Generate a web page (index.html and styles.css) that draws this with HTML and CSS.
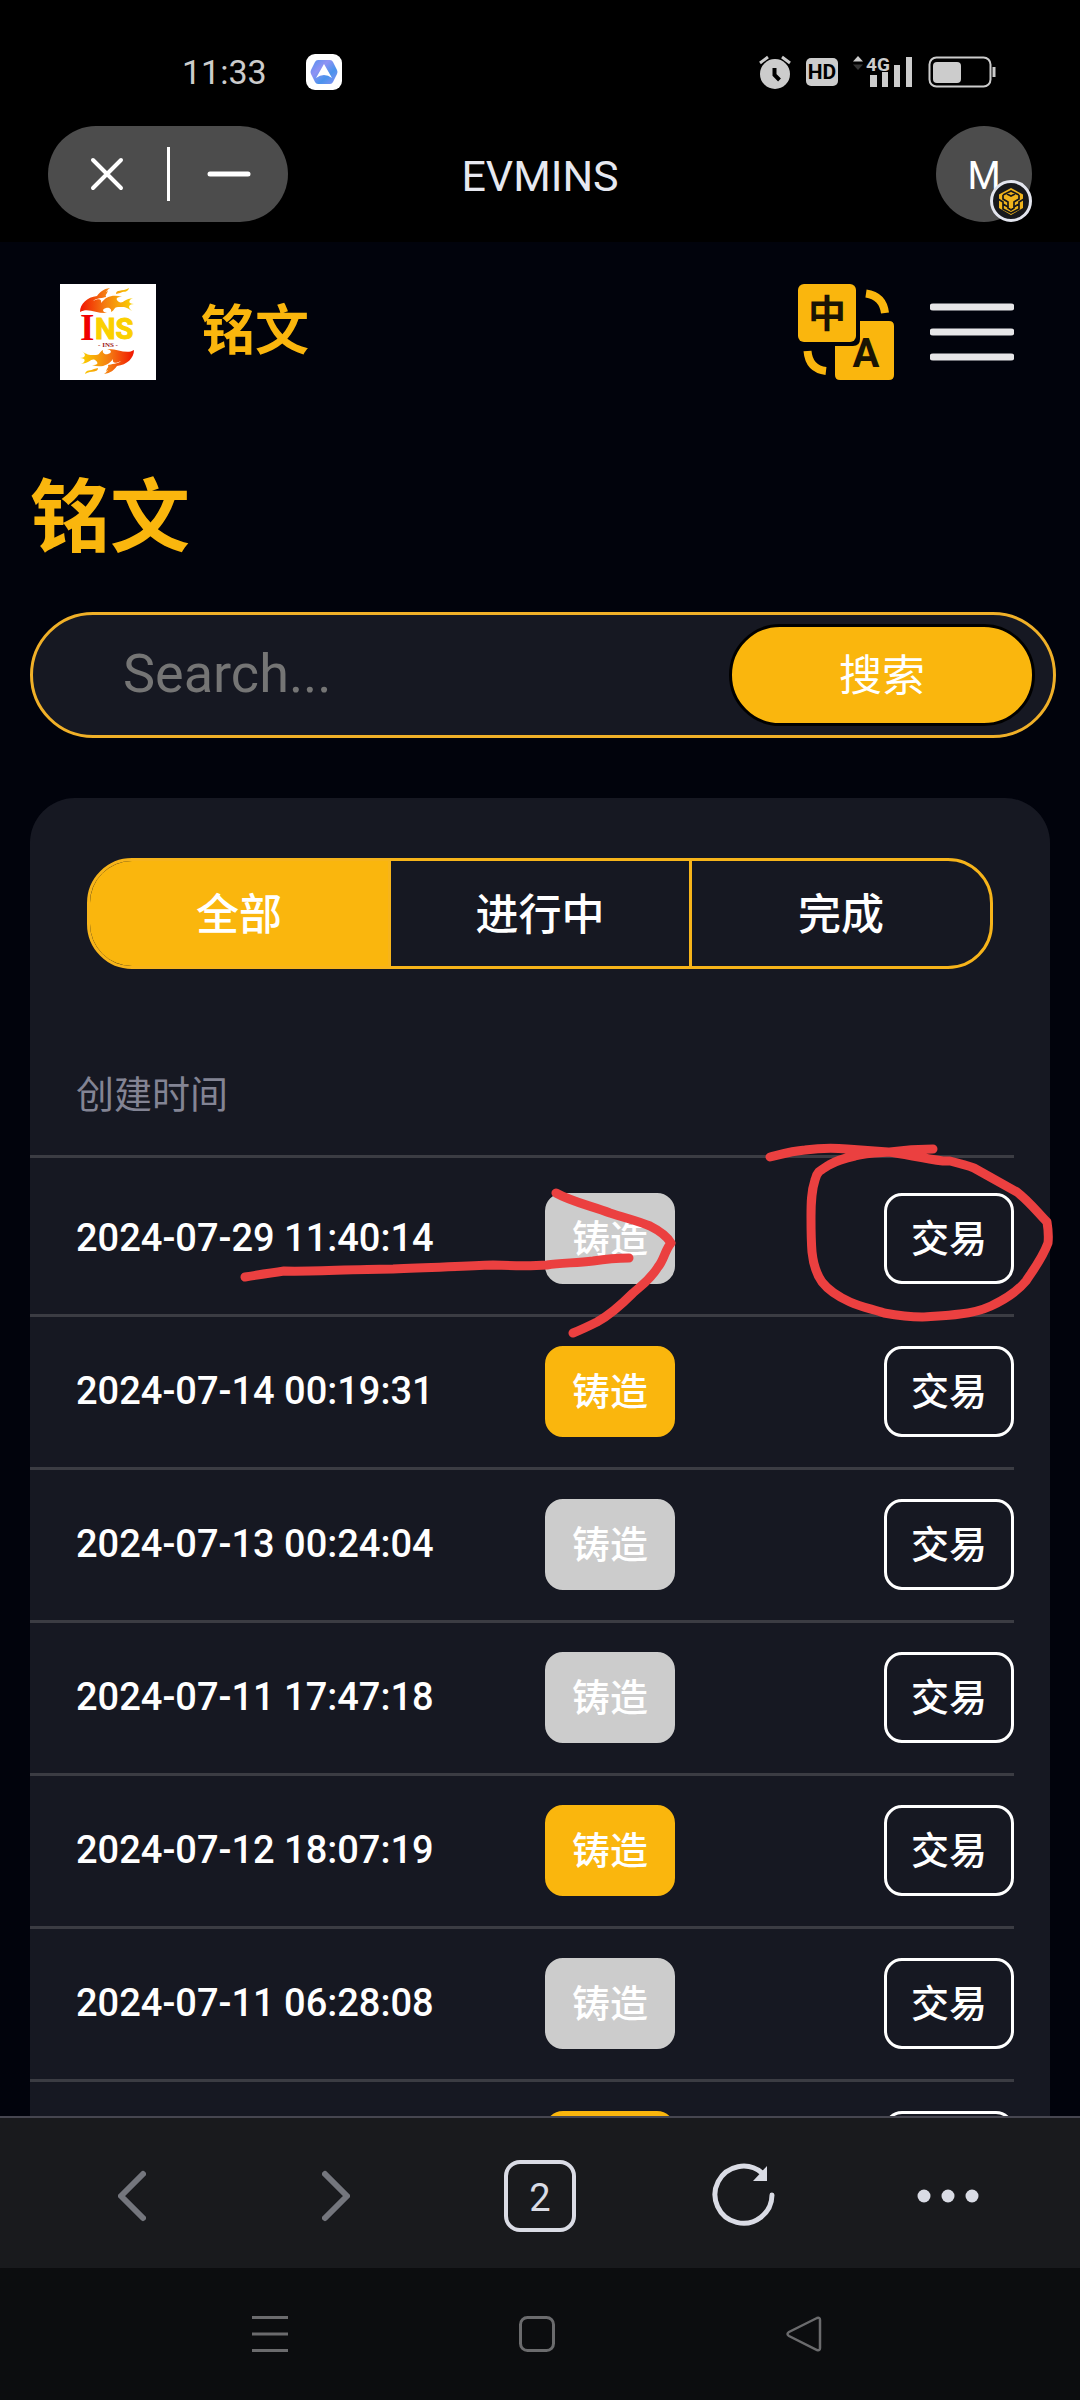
FILE: index.html
```html
<!DOCTYPE html>
<html lang="zh-CN">
<head>
  <meta charset="UTF-8">
  <meta name="viewport" content="width=device-width, initial-scale=1">
  <title>EVMINS</title>
  <link rel="stylesheet" href="styles.css">
</head>
<body>
  <div class="status-bar">
    <span class="clock">11:33</span>
    <svg class="app-icon" width="36" height="36" viewBox="0 0 36 36">
      <defs>
        <linearGradient id="hex" x1="0" y1="0" x2="1" y2="1">
          <stop offset="0" stop-color="#4f8fee"/>
          <stop offset=".35" stop-color="#8f92f4"/>
          <stop offset=".65" stop-color="#4a93ec"/>
          <stop offset="1" stop-color="#8b90f5"/>
        </linearGradient>
      </defs>
      <rect width="36" height="36" rx="9" fill="#fff"/>
      <path d="M12 6h12q2 0 3 2l4 8q1 2 0 4l-4 8q-1 2-3 2H12q-2 0-3-2l-4-8q-1-2 0-4l4-8q1-2 3-2z" fill="url(#hex)"/>
      <path d="M18 10l8 14q-8-6-16 0z" fill="#fff"/>
    </svg>
    <div class="status-icons">
      <svg width="32" height="34" viewBox="0 0 32 34">
        <circle cx="16" cy="19" r="15" fill="#ccc"/>
        <path d="M1 8l8-6M31 8l-8-6" stroke="#ccc" stroke-width="3"/>
        <path d="M15.500 13v7l5 5" fill="none" stroke="#000" stroke-width="4"/>
      </svg>
      <span class="hd">HD</span>
      <svg width="60" height="34" viewBox="0 0 60 34">
        <path d="M0 6.500l5-5.500 5 5.500z" fill="#ccc"/>
        <path d="M0 9.500l5 5.500 5-5.500z" fill="#333"/>
        <text x="13" y="16" class="net">4G</text>
        <path d="M17 20h7v12h-7zM29 17h6v15h-6zM41 10h6v22h-6zM53 2h6v30h-6z" fill="#ccc"/>
      </svg>
      <svg width="68" height="34" viewBox="0 0 68 34">
        <rect x="1.500" y="2.500" width="61" height="29" rx="7" fill="none" stroke="#ccc" stroke-width="2"/>
        <rect x="5" y="7" width="28" height="21" rx="4" fill="#ccc"/>
        <path d="M66 12v10" stroke="#ccc" stroke-width="3"/>
      </svg>
    </div>
  </div>

  <header class="app-bar">
    <div class="app-side">
      <div class="pill">
        <button class="icon-btn" aria-label="Close">
          <svg width="36" height="36" viewBox="0 0 36 36"><path d="M4 4l28 28M32 4L4 32" stroke="#fff" stroke-width="4" stroke-linecap="round"/></svg>
        </button>
        <span class="pill-line"></span>
        <button class="icon-btn" aria-label="Minimize">
          <svg width="44" height="36" viewBox="0 0 44 36"><path d="M3 18h38" stroke="#fff" stroke-width="5" stroke-linecap="round"/></svg>
        </button>
      </div>
    </div>
    <h1 class="app-title">EVMINS</h1>
    <div class="app-side app-side-right">
      <button class="avatar">M
        <svg class="chain-badge" width="42" height="42" viewBox="0 0 42 42">
          <circle cx="21" cy="21" r="19.500" fill="#17181b" stroke="#e3e5ee" stroke-width="3"/>
          <path d="M21 8l12 6.500v13.500L21 35 9 28V14.500z" fill="#f0b41c"/>
          <g fill="none" stroke="#17181b" stroke-width="1.700">
            <path d="M13 15l8-4 8 4M13 15v4l5 3v6l3 2 3-2v-6l5-3v-4M17 14l4 2 4-2"/>
            <path d="M8 19l5 3v7l8 4 8-4v-7l5-3M13 24l5 3M29 24l-5 3"/>
          </g>
        </svg>
      </button>
    </div>
  </header>

  <main class="page">
    <nav class="site-nav">
      <svg class="logo" width="96" height="96" viewBox="0 0 96 96">
        <defs>
          <linearGradient id="fire" gradientUnits="userSpaceOnUse" x1="20" y1="0" x2="74" y2="0">
            <stop offset="0" stop-color="#f11400"/>
            <stop offset=".45" stop-color="#f47a12"/>
            <stop offset="1" stop-color="#fbd500"/>
          </linearGradient>
          <g id="flame" fill="url(#fire)">
            <path d="M20 28C20 20 27 13 37 12C40 8 43 5 50 4C46 7 45 9 46 13C43 14 36 14 33 17C39 14 42 15 41 19C46 12 54 10 62 13C56 13 55 15 59 18C63 20 64 15 73 14C68 16 68 20 74 20C69 20 67 23 72 27C66 22 62 23 58 23C54 23 55 26 51 28C52 25 49 23 46 24C42 25 42 28 47 29C37 30 28 23 20 28Z"/>
            <path d="M56 10C56 5 62 8 69 4C68 9 63 7 60 9Z"/>
            <path d="M38 14C41 8 46 10 48 6C47 11 44 13 40 14Z"/>
          </g>
        </defs>
        <rect width="96" height="96" fill="#fff"/>
        <use href="#flame"/>
        <use href="#flame" transform="rotate(180 47 47)"/>
        <text x="20" y="56" class="logo-i">I</text>
        <text x="35" y="55" class="logo-ns">NS</text>
        <text x="48" y="63" class="logo-small">- INS -</text>
      </svg>
      <a class="brand" href="#">铭文</a>
      <button class="icon-btn lang" aria-label="切换语言">
        <svg width="96" height="96" viewBox="0 0 96 96">
          <rect width="58" height="58" rx="6" fill="#fab60d"/>
          <path d="M62 37h29q5 0 5 5v49q0 5-5 5H42q-5 0-5-5V62h18q7 0 7-7z" fill="#fab60d"/>
          <path d="M68 9.500Q85 12 87 29M9.500 67Q11 85 28 87" fill="none" stroke="#fab60d" stroke-width="8"/>
          <text x="29" y="43" class="lang-zh">中</text>
          <text x="68" y="83" class="lang-en">A</text>
        </svg>
      </button>
      <button class="icon-btn" aria-label="菜单">
        <svg width="84" height="60" viewBox="0 0 84 60"><path d="M3 5h78M3 30h78M3 55h78" stroke="#e6e6e8" stroke-width="7" stroke-linecap="round"/></svg>
      </button>
    </nav>

    <h2 class="heading">铭文</h2>

    <form class="search">
      <input type="text" class="search-input" placeholder="Search..." aria-label="Search">
      <button type="button" class="search-btn">搜索</button>
    </form>

    <section class="card">
      <div class="tabs">
        <button class="tab active">全部</button>
        <button class="tab">进行中</button>
        <button class="tab">完成</button>
      </div>
      <table class="list">
        <thead>
          <tr><th class="col-time">创建时间</th><th></th><th></th></tr>
        </thead>
        <tbody>
          <tr><td>2024-07-29 11:40:14</td><td><button class="btn mint off">铸造</button></td><td class="right"><button class="btn trade">交易</button></td></tr>
          <tr><td>2024-07-14 00:19:31</td><td><button class="btn mint">铸造</button></td><td class="right"><button class="btn trade">交易</button></td></tr>
          <tr><td>2024-07-13 00:24:04</td><td><button class="btn mint off">铸造</button></td><td class="right"><button class="btn trade">交易</button></td></tr>
          <tr><td>2024-07-11 17:47:18</td><td><button class="btn mint off">铸造</button></td><td class="right"><button class="btn trade">交易</button></td></tr>
          <tr><td>2024-07-12 18:07:19</td><td><button class="btn mint">铸造</button></td><td class="right"><button class="btn trade">交易</button></td></tr>
          <tr><td>2024-07-11 06:28:08</td><td><button class="btn mint off">铸造</button></td><td class="right"><button class="btn trade">交易</button></td></tr>
          <tr><td></td><td><button class="btn mint" aria-label="铸造"></button></td><td class="right"><button class="btn trade" aria-label="交易"></button></td></tr>
        </tbody>
      </table>
    </section>
  </main>

  <nav class="browser-bar">
    <button class="icon-btn" aria-label="Back">
      <svg width="28" height="52" viewBox="0 0 28 52"><path d="M25 4L3 26l22 22" fill="none" stroke="#74767d" stroke-width="6" stroke-linecap="round" stroke-linejoin="round"/></svg>
    </button>
    <button class="icon-btn" aria-label="Forward">
      <svg width="28" height="52" viewBox="0 0 28 52"><path d="M3 4l22 22L3 48" fill="none" stroke="#74767d" stroke-width="6" stroke-linecap="round" stroke-linejoin="round"/></svg>
    </button>
    <button class="icon-btn" aria-label="Tabs"><span class="tab-count">2</span></button>
    <button class="icon-btn" aria-label="Reload">
      <svg width="64" height="68" viewBox="0 0 64 68">
        <path d="M60 33A28.500 28.500 0 1 1 50 11" fill="none" stroke="#dadce5" stroke-width="5" stroke-linecap="round"/>
        <path d="M55 4v15H41z" fill="#dadce5"/>
      </svg>
    </button>
    <button class="icon-btn" aria-label="More">
      <svg width="62" height="14" viewBox="0 0 62 14" fill="#dadce5"><circle cx="7" cy="7" r="6.500"/><circle cx="31" cy="7" r="6.500"/><circle cx="55" cy="7" r="6.500"/></svg>
    </button>
  </nav>

  <nav class="system-bar">
    <button class="icon-btn" aria-label="Recent apps">
      <svg width="36" height="36" viewBox="0 0 36 36"><path d="M0 1.500h36M0 18h36M0 34.500h36" stroke="#6b6b6d" stroke-width="3"/></svg>
    </button>
    <button class="icon-btn" aria-label="Home">
      <svg width="36" height="36" viewBox="0 0 36 36"><rect x="1.500" y="1.500" width="33" height="33" rx="7" fill="none" stroke="#6b6b6d" stroke-width="3"/></svg>
    </button>
    <button class="icon-btn" aria-label="Return">
      <svg width="36" height="36" viewBox="0 0 36 36"><path d="M31 2L3 16Q0 18 3 20L31 34Q34 35 34 32V4Q34 1 31 2z" fill="none" stroke="#6b6b6d" stroke-width="2.500"/></svg>
    </button>
  </nav>

  <!-- red pen marks over the first row -->
  <svg class="marks" viewBox="0 0 1080 2400" fill="none" stroke="#eb4040" stroke-width="9" stroke-linecap="round" stroke-linejoin="round">
    <path d="M245 1277Q270 1273 284 1271C310 1272 360 1269 393 1269C430 1268 460 1266 493 1265C515 1266 535 1266 547 1265C560 1263 575 1263 593 1261Q612 1258 629 1258"/>
    <path d="M556 1193C572 1202 592 1206 610 1213C625 1218 638 1221 650 1226C662 1232 668 1238 671 1243C665 1250 664 1260 658 1267C650 1280 643 1284 633 1293C620 1306 610 1315 597 1322Q583 1329 573 1333"/>
    <path d="M770 1157C782 1154 792 1151 805 1150C820 1148 835 1148 847 1149C862 1150 875 1151 888 1152C905 1154 920 1158 943 1161L950 1161C958 1163 966 1165 974 1168L1017 1192C1030 1202 1038 1213 1047 1222Q1049 1234 1048 1243C1043 1257 1034 1269 1026 1281C1017 1292 1006 1299 991 1306C980 1311 970 1313 960 1314C946 1316 934 1316 922 1317C908 1317 895 1315 884 1313C872 1309 861 1307 850 1302C839 1297 829 1291 822 1282C815 1272 813 1262 812 1252C811 1240 811 1226 811 1217C811 1204 811 1192 815 1180C817 1171 821 1170 829 1165C836 1161 845 1158 855 1156C866 1153 875 1153 890 1152C904 1150 920 1149 933 1149"/>
  </svg>
</body>
</html>
```

FILE: styles.css
```css
* {
  box-sizing: border-box;
}

body {
  margin: 0;
  height: 100vh;
  display: flex;
  flex-direction: column;
  position: relative;
  background: #01030c;
  color: #fff;
  font-family: Roboto, "Noto Sans CJK SC", sans-serif;
}

button,
input {
  font-family: inherit;
  margin: 0;
}

svg {
  display: block;
}

.icon-btn {
  display: flex;
  justify-content: center;
  align-items: center;
  padding: 0;
  border: none;
  background: none;
  cursor: pointer;
}

/* phone status bar */
.status-bar {
  flex: none;
  display: flex;
  align-items: center;
  height: 126px;
  padding: 18px 84px 0 182px;
  background: #000;
}

.clock {
  width: 90px;
  font-size: 34px;
  color: #ccc;
}

.app-icon {
  margin-left: 34px;
}

.status-icons {
  display: flex;
  align-items: center;
  gap: 15px;
  margin-left: auto;
}

.hd {
  width: 32px;
  height: 28px;
  border-radius: 5px;
  background: #ccc;
  color: #000;
  font-size: 21px;
  font-weight: 700;
  line-height: 28px;
  text-align: center;
}

.net {
  fill: #ccc;
  font-size: 19px;
  font-weight: 700;
}

/* wallet header */
.app-bar {
  flex: none;
  display: flex;
  align-items: flex-start;
  height: 116px;
  padding: 0 48px;
  background: #000;
}

.app-side {
  flex: 1;
  display: flex;
}

.app-side-right {
  justify-content: flex-end;
}

.pill {
  display: flex;
  align-items: center;
  width: 240px;
  height: 96px;
  border-radius: 48px;
  background: #4c4c4c;
}

.pill .icon-btn {
  flex: 1;
  height: 96px;
}

.pill-line {
  width: 3px;
  height: 54px;
  background: #fff;
}

.app-title {
  margin: 0;
  font-size: 43px;
  font-weight: 400;
  line-height: 100px;
  color: #e6e8f0;
}

.avatar {
  position: relative;
  width: 96px;
  height: 96px;
  padding: 4px 0 0;
  border: none;
  border-radius: 50%;
  background: #4c4c4c;
  color: #fff;
  font-size: 38px;
}

.chain-badge {
  position: absolute;
  right: 0;
  bottom: 0;
}

/* page */
.page {
  flex: 1;
  min-height: 0;
  overflow-y: auto;
  scrollbar-width: none;
  padding: 0 30px;
}

.site-nav {
  display: flex;
  align-items: center;
  padding: 42px 36px 0 30px;
}

.brand {
  margin-left: 45px;
  color: #fab60d;
  font-size: 54px;
  font-weight: 700;
  line-height: 96px;
  text-decoration: none;
}

.lang {
  margin-left: auto;
  margin-right: 36px;
}

.logo-i {
  fill: #f00000;
  font-family: "Liberation Serif", serif;
  font-size: 37px;
  font-weight: 700;
}

.logo-ns {
  fill: #fbd000;
  stroke: #fbd000;
  stroke-width: 1px;
  font-size: 29px;
  font-weight: 700;
}

.logo-small {
  fill: #a01818;
  font-family: "Liberation Serif", serif;
  font-size: 7px;
  font-weight: 700;
  text-anchor: middle;
}

.lang-zh {
  fill: #1a1404;
  font-size: 38px;
  font-weight: 700;
  text-anchor: middle;
}

.lang-en {
  fill: #1a1404;
  font-size: 40px;
  font-weight: 700;
  text-anchor: middle;
}

.heading {
  margin: 78px 0 0;
  color: #fab60d;
  font-size: 80px;
  font-weight: 700;
  line-height: 120px;
}

.search {
  display: flex;
  align-items: center;
  height: 126px;
  margin: 34px -6px 0 0;
  padding: 0 18px 0 90px;
  border: 3px solid #f0b028;
  border-radius: 63px;
  background: #161822;
}

.search-input {
  flex: 1;
  min-width: 0;
  padding: 0 0 3px;
  border: none;
  outline: none;
  background: none;
  color: #fff;
  font-size: 54px;
}

.search-input::placeholder {
  color: #757575;
}

.search-btn {
  width: 306px;
  height: 102px;
  padding: 0 0 6px;
  border: 3px solid #000;
  border-radius: 51px;
  background: #fab60d;
  color: #fff;
  font-size: 43px;
}

.card {
  margin-top: 60px;
  padding: 60px 36px 0 0;
  border-radius: 45px 45px 0 0;
  background: #161822;
}

.tabs {
  display: flex;
  height: 111px;
  margin: 0 21px 0 57px;
  border: 3px solid #f7b41a;
  border-radius: 45px;
  overflow: hidden;
}

.tab {
  flex: 1;
  padding: 0 0 6px;
  border: none;
  background: none;
  color: #fff;
  font-size: 43px;
  font-weight: 500;
}

.tab + .tab {
  border-left: 3px solid #f7b41a;
}

.tab.active {
  background: #fab60d;
}

.list {
  width: 100%;
  margin-top: 98px;
  border-spacing: 0;
}

.list th,
.list td {
  padding: 0;
  border-bottom: 3px solid #3b3c43;
}

.list th {
  padding-bottom: 32px;
  color: #838494;
  font-size: 38px;
  font-weight: 400;
  line-height: 56px;
  text-align: left;
}

.list td {
  height: 153px;
  padding-bottom: 2px;
  font-size: 38px;
  font-weight: 500;
}

.list tbody tr:first-child td {
  height: 159px;
  padding-top: 6px;
}

.list th:first-child,
.list td:first-child {
  padding-left: 46px;
}

.col-time {
  width: 515px;
}

.list .right {
  text-align: right;
}

.btn {
  display: inline-block;
  width: 130px;
  height: 91px;
  padding: 0 0 6px;
  border: 3px solid transparent;
  border-radius: 18px;
  color: #fff;
  font-size: 38px;
  font-weight: 500;
  vertical-align: middle;
}

.mint {
  border-color: #fab60d;
  background: #fab60d;
}

.mint.off {
  border-color: #ccc;
  background: #ccc;
}

.trade {
  border-color: #fff;
  background: none;
}

/* browser toolbar */
.browser-bar {
  flex: none;
  display: grid;
  grid-template-columns: repeat(5, 1fr);
  height: 152px;
  padding: 6px 30px 0;
  border-top: 2px solid #464650;
  background: #191a1d;
}

.tab-count {
  width: 72px;
  height: 72px;
  border: 4px solid #dadce5;
  border-radius: 16px;
  color: #dadce5;
  font-size: 38px;
  line-height: 68px;
  text-align: center;
}

/* android navigation */
.system-bar {
  flex: none;
  display: grid;
  grid-template-columns: repeat(3, 1fr);
  height: 132px;
  padding: 0 142px 0 136px;
  background: #0c0d0f;
}

.marks {
  position: absolute;
  top: 0;
  left: 0;
  width: 100%;
  pointer-events: none;
}
```
